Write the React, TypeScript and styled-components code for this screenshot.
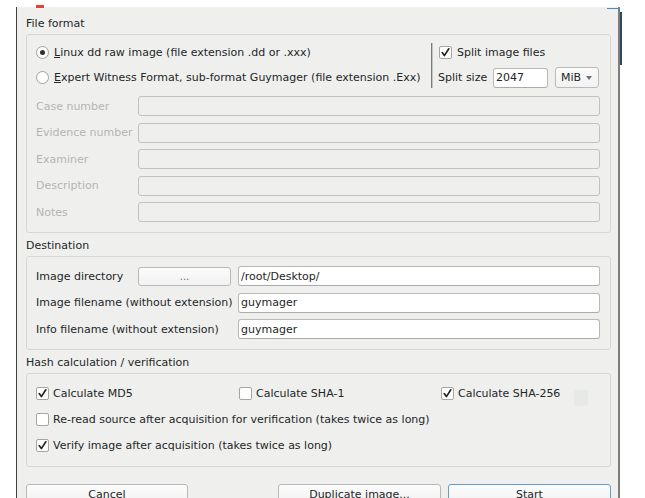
import styled, { createGlobalStyle } from "styled-components";

const GlobalStyle = createGlobalStyle`
  body {
    margin: 0;
    background: #ffffff;
    font-family: "DejaVu Sans", "Liberation Sans", sans-serif;
    font-size: 11px;
    color: #232627;
  }
`;

const Page = styled.div`
  position: relative;
  height: 498px;
  overflow: hidden;
  padding: 7px 0 0 16px;
  box-sizing: border-box;
`;

const RedMark = styled.div`
  position: absolute;
  left: 36px;
  top: 5px;
  width: 8px;
  height: 3px;
  background: #e0413a;
`;

const BlueLine = styled.div`
  position: absolute;
  left: 607px;
  top: 8px;
  width: 13px;
  height: 1px;
  background: #3d8fd1;
`;

const DarkStrip = styled.div`
  position: absolute;
  left: 620px;
  top: 12px;
  width: 2px;
  height: 53px;
  background: #2d4963;
`;

const Dialog = styled.div`
  width: 604px;
  min-height: 500px;
  box-sizing: border-box;
  background: #eff0ee;
  border-left: 1px solid #3f4240;
  border-right: 2px solid #7c7e7c;
  padding: 10px 7px 0 9px;
`;

const SectionTitle = styled.div`
  height: 14px;
  line-height: 14px;
  margin-bottom: 3px;
`;

const Frame = styled.div<{ $pad: string }>`
  border: 1px solid #d5d8d5;
  border-radius: 3px;
  padding: ${(p) => p.$pad};
  margin-bottom: 6px;
`;

const TopArea = styled.div`
  display: flex;
  margin-bottom: 8px;
`;

const RadioColumn = styled.div`
  width: 395px;
  display: flex;
  flex-direction: column;
  gap: 5px;
`;

const Separator = styled.div`
  width: 1px;
  height: 45px;
  margin-top: 1px;
  background: #7a7c7a;
  border-right: 1px solid #c4c6c4;
`;

const SplitColumn = styled.div`
  margin-left: 5px;
  width: 161px;
  display: flex;
  flex-direction: column;
  gap: 5px;
`;

const OptionRow = styled.label<{ $indent?: number }>`
  display: flex;
  align-items: center;
  height: 20px;
  gap: 5px;
  padding-left: ${(p) => p.$indent ?? 0}px;
  white-space: nowrap;
`;

const RadioCircle = styled.span<{ $on?: boolean }>`
  width: 13px;
  height: 13px;
  box-sizing: border-box;
  border-radius: 50%;
  border: 1px solid #9fa29f;
  background: #ffffff;
  display: flex;
  align-items: center;
  justify-content: center;
  &::after {
    content: "";
    width: 5px;
    height: 5px;
    border-radius: 50%;
    background: ${(p) => (p.$on ? "#2f3130" : "transparent")};
  }
`;

const Box = styled.span`
  width: 13px;
  height: 13px;
  box-sizing: border-box;
  border: 1px solid #a3a6a3;
  border-radius: 2px;
  background: #ffffff;
  display: flex;
  align-items: center;
  justify-content: center;
  flex-shrink: 0;
`;

const SplitSizeRow = styled.div`
  display: flex;
  align-items: center;
  height: 21px;
`;

const SplitLabel = styled.span`
  width: 55px;
`;

const TextInput = styled.input<{ $w?: number }>`
  box-sizing: border-box;
  height: 20px;
  width: ${(p) => (p.$w ? `${p.$w}px` : "100%")};
  margin: 0;
  padding: 0 2px;
  font: inherit;
  color: #232627;
  background: #ffffff;
  border: 1px solid #b8bbb8;
  border-bottom-color: #a9aca9;
  border-radius: 3px;
  outline: none;
  &:disabled {
    background: #eff0ee;
    border-color: #bfc2bf;
  }
`;

const Combo = styled.div`
  margin-left: 7px;
  width: 44px;
  height: 21px;
  box-sizing: border-box;
  border: 1px solid #b8bbb8;
  border-radius: 3px;
  background: linear-gradient(#fbfbfb, #f1f2f1);
  display: flex;
  align-items: center;
  padding: 0 6px 0 5px;
  justify-content: space-between;
`;

const Arrow = styled.span`
  width: 0;
  height: 0;
  border-left: 3px solid transparent;
  border-right: 3px solid transparent;
  border-top: 4px solid #6e716e;
`;

const FieldGrid = styled.div<{ $cols: string }>`
  display: grid;
  grid-template-columns: ${(p) => p.$cols};
  grid-auto-rows: 20px;
  row-gap: 6.5px;
  align-items: center;
`;

const FieldLabel = styled.span<{ $disabled?: boolean; $span?: number }>`
  color: ${(p) => (p.$disabled ? "#b3b5b3" : "#232627")};
  white-space: nowrap;
  grid-column: span ${(p) => p.$span ?? 1};
`;

const PushButton = styled.button<{ $w: number; $accent?: boolean }>`
  width: ${(p) => p.$w}px;
  height: 20px;
  margin: 0;
  padding: 0;
  box-sizing: border-box;
  font: inherit;
  color: #232627;
  background: linear-gradient(#fcfcfc, #f1f2f1);
  border: 1px solid ${(p) => (p.$accent ? "#5b9fd6" : "#b7bab7")};
  border-radius: 3px;
  text-align: center;
`;

const DotsButton = styled(PushButton)`
  color: #6a6d6a;
  font-size: 10px;
  height: 19px;
`;

const HashGrid = styled.div`
  display: grid;
  grid-template-columns: 203px 202px 1fr;
  grid-auto-rows: 20px;
  row-gap: 6px;
`;

const WideRow = styled(OptionRow)`
  grid-column: 1 / -1;
`;

const HashRow = styled(OptionRow)`
  gap: 4px;
`;

const GhostBox = styled.span`
  margin-left: auto;
  margin-right: 12px;
  margin-top: 10px;
  width: 14px;
  height: 16px;
  border-radius: 2px;
  background: #e7e9e7;
`;

const ButtonBar = styled.div`
  display: flex;
  margin-top: 17px;
`;

const RightButtons = styled.div`
  margin-left: auto;
  display: flex;
  gap: 7px;
`;

const Tick = () => (
  <svg width="11" height="11" viewBox="0 0 11 11">
    <path d="M2.2 5.6 L4.4 8.6 L8.8 1.8" fill="none" stroke="#232627" strokeWidth="1.7" strokeLinecap="round" strokeLinejoin="round" />
  </svg>
);

const CheckBox = ({ on }: { on?: boolean }) => <Box>{on && <Tick />}</Box>;

const caseFields = ["Case number", "Evidence number", "Examiner", "Description", "Notes"];

export default function App() {
  return (
    <>
      <GlobalStyle />
      <Page>
        <RedMark />
        <BlueLine />
        <DarkStrip />
        <Dialog>
          <SectionTitle>File format</SectionTitle>
          <Frame $pad="7px 10px 10px 9px">
            <TopArea>
              <RadioColumn>
                <OptionRow>
                  <RadioCircle $on />
                  <span>
                    <u>L</u>inux dd raw image (file extension .dd or .xxx)
                  </span>
                </OptionRow>
                <OptionRow>
                  <RadioCircle />
                  <span>
                    <u>E</u>xpert Witness Format, sub-format Guymager (file extension .Exx)
                  </span>
                </OptionRow>
              </RadioColumn>
              <Separator />
              <SplitColumn>
                <OptionRow $indent={1}>
                  <CheckBox on />
                  <span>Split image files</span>
                </OptionRow>
                <SplitSizeRow>
                  <SplitLabel>Split size</SplitLabel>
                  <TextInput $w={55} readOnly value="2047" />
                  <Combo>
                    <span>MiB</span>
                    <Arrow />
                  </Combo>
                </SplitSizeRow>
              </SplitColumn>
            </TopArea>
            <FieldGrid $cols="102px 1fr">
              {caseFields.map((f) => (
                <>
                  <FieldLabel key={f} $disabled>
                    {f}
                  </FieldLabel>
                  <TextInput key={f + "-in"} disabled />
                </>
              ))}
            </FieldGrid>
          </Frame>

          <SectionTitle>Destination</SectionTitle>
          <Frame $pad="9px 10px 10px 9px">
            <FieldGrid $cols="102px 100px 1fr">
              <FieldLabel>Image directory</FieldLabel>
              <DotsButton $w={93}>...</DotsButton>
              <TextInput readOnly value="/root/Desktop/" />
              <FieldLabel $span={2}>Image filename (without extension)</FieldLabel>
              <TextInput readOnly value="guymager" />
              <FieldLabel $span={2}>Info filename (without extension)</FieldLabel>
              <TextInput readOnly value="guymager" />
            </FieldGrid>
          </Frame>

          <SectionTitle>Hash calculation / verification</SectionTitle>
          <Frame $pad="9px 10px 11px 9px">
            <HashGrid>
              <HashRow>
                <CheckBox on />
                <span>Calculate MD5</span>
              </HashRow>
              <HashRow>
                <CheckBox />
                <span>Calculate SHA-1</span>
              </HashRow>
              <HashRow>
                <CheckBox on />
                <span>Calculate SHA-256</span>
                <GhostBox />
              </HashRow>
              <WideRow as={HashRow}>
                <CheckBox />
                <span>Re-read source after acquisition for verification (takes twice as long)</span>
              </WideRow>
              <WideRow as={HashRow}>
                <CheckBox on />
                <span>Verify image after acquisition (takes twice as long)</span>
              </WideRow>
            </HashGrid>
          </Frame>

          <ButtonBar>
            <PushButton $w={162}>Cancel</PushButton>
            <RightButtons>
              <PushButton $w={163}>Duplicate image...</PushButton>
              <PushButton $w={163} $accent>
                Start
              </PushButton>
            </RightButtons>
          </ButtonBar>
        </Dialog>
      </Page>
    </>
  );
}
